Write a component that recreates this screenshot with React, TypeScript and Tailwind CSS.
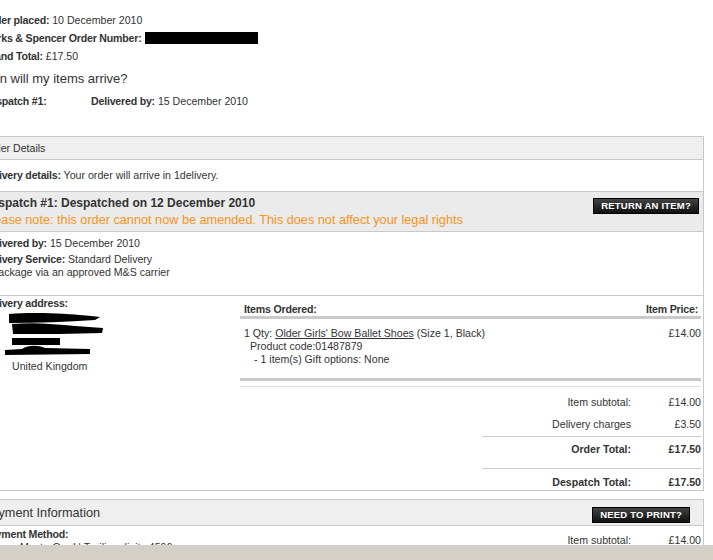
import React from 'react';

const font = { fontFamily: '"Liberation Sans", Arial, sans-serif' };

function L({ children }: { children: React.ReactNode }) {
  return <b className="tracking-[-0.2px]">{children}</b>;
}

function DarkButton({ label }: { label: string }) {
  return (
    <div className="flex h-[16px] items-center border border-black bg-gradient-to-b from-[#444] to-[#111] px-[7px] text-[9.5px] font-bold leading-none tracking-[0.2px] text-white">
      {label}
    </div>
  );
}

function AddressScribble() {
  return (
    <svg width="110" height="46" viewBox="0 0 110 46" className="ml-[20px] block">
      <path d="M6 2 C30 0 62 1 97 5 L92 8 C64 10 34 11 6 11 Z" fill="#000" />
      <path d="M9 12 C30 10 52 12 72 14 L100 16 L99 21 C72 22 40 22 10 22 Z" fill="#000" />
      <rect x="9" y="26" width="48" height="7" fill="#000" />
      <path d="M2 38 L19 37 C25 33 35 33 42 36 L87 37 L87 42 L2 43 Z" fill="#000" />
    </svg>
  );
}

export default function App() {
  return (
    <div className="flex h-[560px] w-[713px] flex-col overflow-hidden bg-white text-[#333]" style={font}>
      <div className="min-h-0 flex-1 overflow-hidden">
        <div className="-ml-[28px] w-[732px]">
          {/* order summary */}
          <div className="pl-[11px] pt-[11px] text-[10.6px]">
            <p className="leading-[18px]">
              <L>Order placed:</L> 10 December 2010
            </p>
            <p className="flex items-center whitespace-nowrap leading-[18px]">
              <L>Marks &amp; Spencer Order Number:</L>
              <span className="ml-[4px] inline-block h-[12px] w-[113px] bg-black" />
            </p>
            <p className="leading-[18px]">
              <L>Grand Total:</L> £17.50
            </p>
            <h2 className="-ml-[10px] mt-[4px] text-[13px] leading-[20px]">When will my items arrive?</h2>
            <div className="mt-[3px] flex leading-[18px]">
              <b className="w-[108px] tracking-[-0.2px]">Despatch #1:</b>
              <span>
                <L>Delivered by:</L> 15 December 2010
              </span>
            </div>
          </div>

          {/* order details box */}
          <div className="mt-[26px] border border-[#c8c8c8] text-[10.6px]">
            <div className="border-b border-[#c8c8c8] bg-[#efefef] pl-[10px] leading-[22px]">Order Details</div>
            <div className="border-b border-[#c8c8c8] pl-[10px] leading-[31px]">
              <L>Delivery details:</L> Your order will arrive in 1delivery.
            </div>

            <div className="flex justify-between border-b border-[#c8c8c8] bg-[#ebebeb] pb-[2px] pl-[10px] pr-[4px] pt-[3px]">
              <div>
                <p className="text-[12px] font-bold leading-[17px]">Despatch #1: Despatched on 12 December 2010</p>
                <p className="text-[12.7px] leading-[17px] text-[#f7941d]">
                  Please note: this order cannot now be amended. This does not affect your legal rights
                </p>
              </div>
              <div className="pt-[3px]">
                <DarkButton label="RETURN AN ITEM?" />
              </div>
            </div>

            <div className="border-b border-[#c8c8c8] pb-[18px] pl-[10px] pt-[4px]">
              <p className="leading-[14px]">
                <L>Delivered by:</L> 15 December 2010
              </p>
              <p className="leading-[18px]">
                <L>Delivery Service:</L> Standard Delivery
              </p>
              <p className="leading-[9px]">A package via an approved M&amp;S carrier</p>
            </div>

            <div className="flex pl-[10px] pr-[2px]">
              <div className="w-[257px] shrink-0">
                <p className="font-bold leading-[14px] tracking-[-0.2px]">Delivery address:</p>
                <div className="mt-[2px]">
                  <AddressScribble />
                </div>
                <p className="ml-[29px] mt-[1px] leading-[14px]">United Kingdom</p>
              </div>

              <div className="flex-1">
                <div className="flex justify-between pl-[4px] pr-[3px] pt-[6px] font-bold leading-[14px] tracking-[-0.2px]">
                  <span>Items Ordered:</span>
                  <span>Item Price:</span>
                </div>
                <div className="border-t-[3px] border-[#cacaca]" />
                <div className="mt-[8px] flex justify-between pl-[4px] leading-[13px]">
                  <div>
                    <p>
                      1 Qty: <span className="underline">Older Girls&apos; Bow Ballet Shoes</span> (Size 1, Black)
                    </p>
                    <p className="pl-[6px]">Product code:01487879</p>
                    <p className="pl-[10px]">- 1 item(s) Gift options: None</p>
                  </div>
                  <span>£14.00</span>
                </div>
                <div className="mt-[12px] border-t-[3px] border-[#cacaca]" />
                <div className="mt-[5px] border-t border-[#dcdcdc]" />

                <div className="mt-[7px] grid grid-cols-[1fr_70px] text-right leading-[16px]">
                  <span>Item subtotal:</span>
                  <span>£14.00</span>
                  <span className="mt-[6px]">Delivery charges</span>
                  <span className="mt-[6px]">£3.50</span>
                </div>
                <div className="ml-auto mt-[4px] w-[219px] border-t border-[#c8c8c8] pt-[4px]">
                  <div className="grid grid-cols-[1fr_70px] pb-[11px] text-right font-bold leading-[16px]">
                    <span>Order Total:</span>
                    <span>£17.50</span>
                  </div>
                  <div className="grid grid-cols-[1fr_70px] border-t border-[#c8c8c8] pt-[5px] text-right font-bold leading-[16px]">
                    <span>Despatch Total:</span>
                    <span>£17.50</span>
                  </div>
                </div>
              </div>
            </div>
          </div>

          {/* payment box */}
          <div className="mt-[8px] border border-[#c8c8c8] text-[10.6px]">
            <div className="flex h-[26px] items-start justify-between border-b border-[#c8c8c8] bg-[#efefef] pl-[10px] pr-[13px]">
              <span className="pt-[5px] text-[12.7px] leading-[17px]">Payment Information</span>
              <div className="mt-[7px]">
                <DarkButton label="NEED TO PRINT?" />
              </div>
            </div>
            <div className="flex pl-[10px] pr-[2px]">
              <div className="flex-1 pt-[2px]">
                <p className="font-bold leading-[12px] tracking-[-0.2px]">Payment Method:</p>
                <p className="pl-[37px] leading-[14px]">MasterCard | Trailing digits 4596</p>
              </div>
              <div className="grid w-[219px] grid-cols-[1fr_70px] pt-[6px] text-right leading-[16px]">
                <span>Item subtotal:</span>
                <span>£14.00</span>
              </div>
            </div>
          </div>
        </div>
      </div>
      <div className="h-[15px] shrink-0 bg-[#d4d0c8]" />
    </div>
  );
}
